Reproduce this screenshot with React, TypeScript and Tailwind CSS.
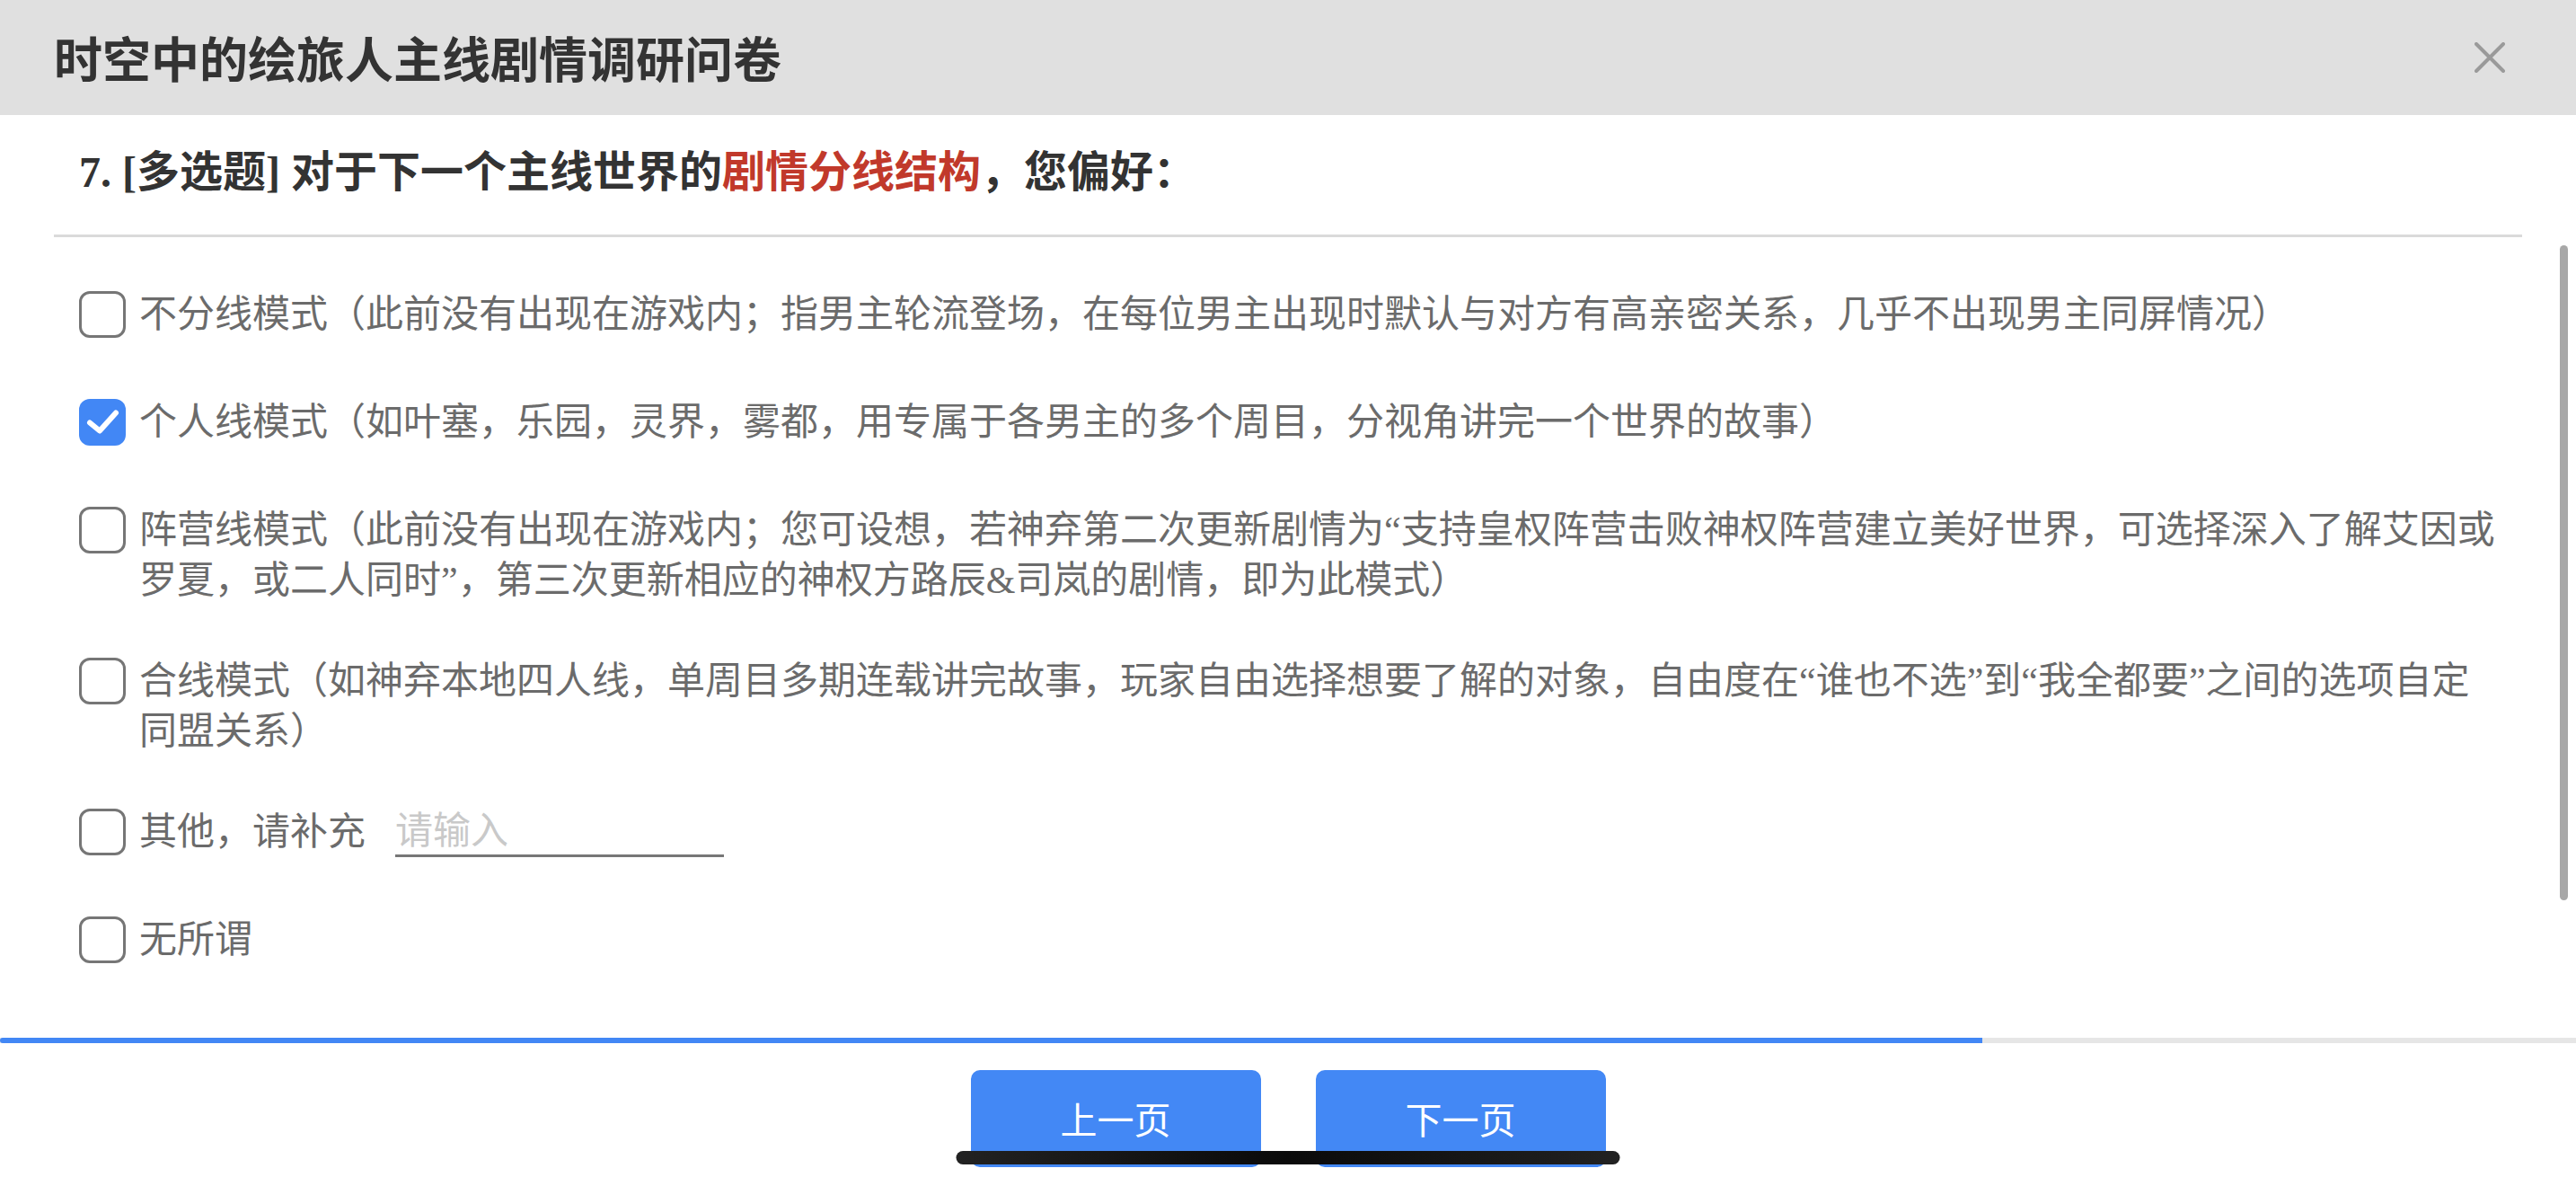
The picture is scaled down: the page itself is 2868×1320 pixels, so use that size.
import React from "react";

const serifCjk = {
  fontFamily: '"Liberation Serif", "Noto Sans CJK SC", serif',
};

type Option = {
  lines: string[];
  checked?: boolean;
  withInput?: boolean;
};

const options: Option[] = [
  {
    lines: [
      "不分线模式（此前没有出现在游戏内；指男主轮流登场，在每位男主出现时默认与对方有高亲密关系，几乎不出现男主同屏情况）",
    ],
  },
  {
    lines: [
      "个人线模式（如叶塞，乐园，灵界，雾都，用专属于各男主的多个周目，分视角讲完一个世界的故事）",
    ],
    checked: true,
  },
  {
    lines: [
      "阵营线模式（此前没有出现在游戏内；您可设想，若神弃第二次更新剧情为“支持皇权阵营击败神权阵营建立美好世界，可选择深入了解艾因或",
      "罗夏，或二人同时”，第三次更新相应的神权方路辰&司岚的剧情，即为此模式）",
    ],
  },
  {
    lines: [
      "合线模式（如神弃本地四人线，单周目多期连载讲完故事，玩家自由选择想要了解的对象，自由度在“谁也不选”到“我全都要”之间的选项自定",
      "同盟关系）",
    ],
  },
  { lines: ["其他，请补充"], withInput: true },
  { lines: ["无所谓"] },
];

const Checkbox = ({ checked }: { checked?: boolean }) =>
  checked ? (
    <div className="mt-[2px] h-[52px] w-[52px] shrink-0 rounded-[12px] bg-[#4287f5] flex items-center justify-center">
      <svg width="52" height="52" viewBox="0 0 52 52" fill="none">
        <path
          d="M12 26.5 L23 35.5 L41 15.5"
          stroke="#fff"
          strokeWidth="6"
          strokeLinecap="round"
          strokeLinejoin="round"
        />
      </svg>
    </div>
  ) : (
    <div className="mt-[2px] h-[52px] w-[52px] shrink-0 rounded-[12px] border-[3.5px] border-[#767676] bg-white" />
  );

export default function App() {
  return (
    <div className="relative flex h-[1320px] w-[2868px] flex-col overflow-hidden bg-white">
      {/* header */}
      <div className="flex h-[128px] shrink-0 items-center justify-between bg-[#e0e0e0] pl-[60px] pr-[79px]">
        <h1
          className="text-[54px] font-bold leading-none text-[#333]"
          style={{ fontFamily: '"Noto Sans CJK SC", sans-serif' }}
        >
          时空中的绘旅人主线剧情调研问卷
        </h1>
        <svg width="34" height="34" viewBox="0 0 34 34" fill="none">
          <path
            d="M2 2 L32 32 M32 2 L2 32"
            stroke="#9a9a9a"
            strokeWidth="4"
            strokeLinecap="round"
          />
        </svg>
      </div>

      {/* scroll area */}
      <div className="relative min-h-0 flex-1 overflow-hidden">
        <div className="px-[60px] pt-[36px]" style={serifCjk}>
          <p className="pl-[28px] text-[48px] font-bold leading-[56px] text-[#333]">
            7. [多选题] 对于下一个主线世界的
            <span className="text-[#c1392b]">剧情分线结构</span>，您偏好：
          </p>
          <div className="mt-[41px] h-[3px] bg-[#dadada]" />

          <div className="mt-[58px] flex flex-col gap-[56px] pl-[28px]">
            {options.map((opt, i) => (
              <div key={i} className="flex min-h-[64px] items-start gap-[15px]">
                <Checkbox checked={opt.checked} />
                <div className="text-[42px] leading-[56px] text-[#6b6b6b]">
                  {opt.withInput ? (
                    <div className="flex items-start">
                      <span className="whitespace-nowrap">{opt.lines[0]}</span>
                      <input
                        placeholder="请输入"
                        className="ml-[33px] h-[56px] w-[366px] border-b-[3px] border-[#777] bg-transparent text-[42px] leading-[53px] text-[#666] outline-none placeholder:text-[#c9c9c9]"
                        style={serifCjk}
                      />
                    </div>
                  ) : (
                    opt.lines.map((line, j) => (
                      <span key={j} className="block whitespace-nowrap">
                        {line}
                      </span>
                    ))
                  )}
                </div>
              </div>
            ))}
          </div>
        </div>

        {/* scrollbar thumb */}
        <div className="absolute right-[9px] top-[145px] h-[729px] w-[9px] rounded-full bg-[#a8a8a8]" />
      </div>

      {/* progress */}
      <div className="h-[6px] shrink-0 bg-[#e6e6e6]">
        <div className="h-full w-[2207px] rounded-l-full bg-[#4287f5]" />
      </div>

      {/* footer */}
      <div
        className="flex h-[159px] shrink-0 justify-center gap-[61px] pt-[30px]"
        style={{ fontFamily: '"Noto Sans CJK SC", sans-serif' }}
      >
        <button className="flex h-[108px] w-[323px] items-center justify-center rounded-[10px] bg-[#4388f5] text-[41px] text-white">
          上一页
        </button>
        <button className="flex h-[108px] w-[323px] items-center justify-center rounded-[10px] bg-[#4388f5] text-[41px] text-white">
          下一页
        </button>
      </div>

      {/* home indicator */}
      <div className="absolute bottom-[24px] left-1/2 h-[15px] w-[739px] -translate-x-1/2 rounded-full bg-linear-to-r from-[#222] via-[#0a0a0a] to-[#222]" />
    </div>
  );
}
